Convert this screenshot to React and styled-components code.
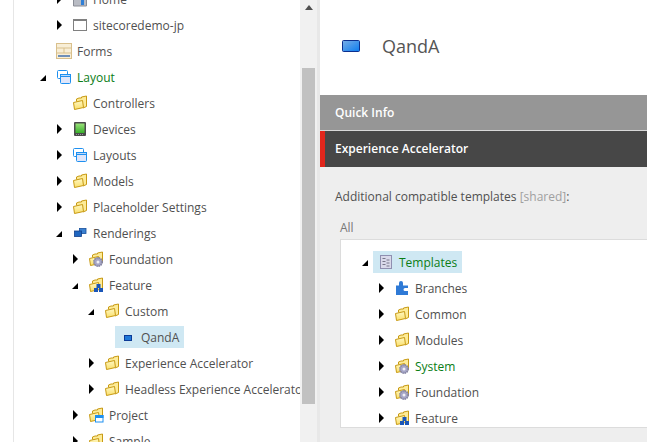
import React from 'react';
import styled, { createGlobalStyle } from 'styled-components';

const GlobalStyle = createGlobalStyle`
  html, body {
    margin: 0;
    padding: 0;
    background: #fff;
    font-family: "Open Sans", "Liberation Sans", sans-serif;
    font-size: 12px;
    color: #505050;
  }
`;

const Page = styled.div`
  display: grid;
  grid-template-columns: 320px 1fr;
  width: 647px;
  height: 442px;
  overflow: hidden;
`;

const Sidebar = styled.aside`
  display: flex;
  height: 442px;
  padding-left: 13px;
  box-sizing: border-box;
  background: #fff;
`;

const TreeViewport = styled.div`
  flex: 1;
  min-width: 0;
  border-left: 1px solid #e6e6e6;
  overflow: hidden;
`;

const SidebarTree = styled.div`
  margin-top: -14px;
  margin-left: -14px;
`;

const Scrollbar = styled.div`
  display: flex;
  flex-direction: column;
  align-items: center;
  width: 17px;
  background: #f1f1f1;
`;

const ScrollUp = styled.div`
  margin: 5px 0 0;
  width: 0;
  height: 0;
  border-left: 4px solid transparent;
  border-right: 4px solid transparent;
  border-bottom: 5px solid #505050;
`;

const ScrollThumb = styled.div`
  margin-top: 58px;
  width: 13px;
  height: 336px;
  background: #c1c1c1;
`;

const Splitter = styled.div`
  width: 3px;
  background: #e8e8e8;
`;

const Main = styled.main`
  display: flex;
  flex-direction: column;
  min-width: 0;
  height: 442px;
  background: #eee;
`;

const Header = styled.header`
  display: flex;
  align-items: center;
  gap: 22px;
  height: 95px;
  padding: 0 0 3px 22px;
  box-sizing: border-box;
  background: #fff;
`;

const Title = styled.h1`
  margin: 0;
  font-size: 18px;
  font-weight: 400;
  line-height: 24px;
  color: #555;
`;

const Section = styled.div`
  height: ${(p) => (p.$active ? 36 : 35)}px;
  line-height: 35px;
  margin-bottom: ${(p) => (p.$active ? 0 : 1)}px;
  padding-left: ${(p) => (p.$active ? 10 : 15)}px;
  background: ${(p) => (p.$active ? '#474747' : '#969696')};
  border-left: ${(p) => (p.$active ? '5px solid #e1261c' : '0')};
  color: #fff;
  font-weight: 600;
`;

const Divider = styled.div`
  height: 1px;
  margin-top: -1px;
  background: #d8d8d8;
`;

const SectionBody = styled.div`
  flex: 1;
  min-height: 0;
  padding: 21px 0 0 15px;
`;

const FieldLabel = styled.div`
  line-height: 18px;
  color: #505050;
`;

const Shared = styled.span`
  color: #a0a0a0;
`;

const ListLabel = styled.div`
  margin: 13px 0 0 5px;
  line-height: 18px;
  color: #777;
`;

const TreeBox = styled.div`
  height: 189px;
  margin: 2px 0 0 5px;
  padding-top: 9px;
  box-sizing: border-box;
  background: #fff;
  border: 1px solid #dcdcdc;
  border-right: 0;
  overflow: hidden;
`;

const Row = styled.div`
  display: flex;
  align-items: center;
  height: 26px;
  padding-left: ${(p) => p.$indent}px;
  white-space: nowrap;
`;

const Toggle = styled.span`
  display: flex;
  align-items: center;
  flex: none;
  width: 16px;
  height: 16px;
`;

const Closed = styled.i`
  width: 0;
  height: 0;
  margin-left: 1px;
  border-top: 5px solid transparent;
  border-bottom: 5px solid transparent;
  border-left: 5px solid #000;
`;

const Open = styled.i`
  width: 0;
  height: 0;
  margin-top: 1px;
  border-left: 6px solid transparent;
  border-bottom: 6px solid #000;
`;

const Item = styled.span`
  display: flex;
  align-items: center;
  gap: 5px;
  height: 22px;
  margin-left: -5px;
  padding: 0 5px;
  background: ${(p) => (p.$selected ? '#cfe8f3' : 'transparent')};
  color: ${(p) => (p.$green ? '#0b7d16' : '#505050')};
`;

const Glyph = styled.svg`
  flex: none;
  display: block;
  width: 16px;
  height: 16px;
`;

const Overlay = ({ type }) => {
  if (type === 'gear') {
    return (
      <g>
        <circle cx="10" cy="11" r="4.200" fill="#a5a5c6" stroke="#80809f" strokeWidth="1.500" strokeDasharray="1.500 0.700" />
        <circle cx="10" cy="11" r="1.500" fill="#eeeef5" />
      </g>
    );
  }
  if (type === 'blocks') {
    return (
      <g fill="#1a56b8">
        <rect x="8.500" y="7" width="4" height="4" />
        <rect x="6" y="11" width="4" height="4" />
        <rect x="11" y="11" width="4" height="4" />
      </g>
    );
  }
  if (type === 'window') {
    return (
      <g>
        <rect x="7.500" y="8.500" width="7.500" height="6.500" fill="#fff" stroke="#1e90f0" />
        <rect x="7.500" y="8.500" width="7.500" height="2" fill="#1e90f0" stroke="#1e90f0" />
      </g>
    );
  }
  return null;
};

const Folder = ({ overlay }) => (
  <Glyph viewBox="0 0 16 16">
    <path d="M4.500 6.500V4L7 3H9.500V2L14.500 1V11.500L11 13" fill="#fdeb97" stroke="#c89a14" />
    <path d="M1.500 7.500L10.500 5.500L11.500 12.500L2.500 14.500Z" fill="url(#folderFront)" stroke="#c89a14" />
    <Overlay type={overlay} />
  </Glyph>
);

const icons = {
  folder: () => <Folder />,
  folderGear: () => <Folder overlay="gear" />,
  folderBlocks: () => <Folder overlay="blocks" />,
  folderWindow: () => <Folder overlay="window" />,
  home: () => (
    <Glyph viewBox="0 0 16 16">
      <path d="M1.500 9L8 3l6.500 6v6h-13z" fill="#b9bcc4" stroke="#8a8d96" />
      <rect x="9" y="9" width="3" height="5" fill="#2f7fd6" />
    </Glyph>
  ),
  site: () => (
    <Glyph viewBox="0 0 16 16">
      <rect x="1.500" y="2.500" width="13" height="11" fill="#fff" stroke="#808080" />
      <rect x="1" y="2" width="14" height="2" fill="#808080" />
    </Glyph>
  ),
  forms: () => (
    <Glyph viewBox="0 0 16 16">
      <rect x="0.500" y="0.500" width="15" height="15" fill="#f8eed6" stroke="#d9c08c" />
      <path d="M1 5h14M1 10h14M8 5v5" stroke="#d9c08c" fill="none" />
      <rect x="2" y="12" width="12" height="2" fill="#6f8fb8" />
    </Glyph>
  ),
  layout: () => (
    <Glyph viewBox="0 0 16 16">
      <rect x="1.500" y="1.500" width="10" height="8" rx="1" fill="#fff" stroke="#1e90f0" />
      <rect x="4.500" y="5.500" width="10" height="9" rx="1" fill="#dfe6fa" stroke="#1e90f0" />
      <rect x="4.500" y="5.500" width="10" height="2" fill="#bcd9fb" stroke="#1e90f0" />
    </Glyph>
  ),
  device: () => (
    <Glyph viewBox="0 0 16 16">
      <rect x="2" y="1" width="12" height="14" rx="1" fill="#4a4a4a" />
      <rect x="3.500" y="2.500" width="9" height="9.500" fill="url(#deviceScreen)" />
      <path d="M4 13.500h8" stroke="#999" strokeDasharray="1 1" />
    </Glyph>
  ),
  renderings: () => (
    <Glyph viewBox="0 0 16 16">
      <rect x="7.500" y="3.500" width="6.500" height="5" fill="#3a80d0" stroke="#174f9c" strokeWidth="0.800" />
      <rect x="2.500" y="6" width="7" height="5.500" fill="#1f66c0" stroke="#123f8a" strokeWidth="0.800" />
    </Glyph>
  ),
  rendering: () => (
    <Glyph viewBox="0 0 16 16">
      <rect x="4.500" y="6.500" width="7" height="5" fill="#1e78d8" stroke="#0c3a96" />
    </Glyph>
  ),
  templates: () => (
    <Glyph viewBox="0 0 16 16">
      <rect x="2.500" y="1.500" width="11" height="13" fill="#d9d9ea" stroke="#8f8fb0" />
      <path d="M4.500 4.500h3M4.500 7.500h3M4.500 10.500h3M8.500 6h3M8.500 9h3M8.500 12h3" stroke="#77778a" />
    </Glyph>
  ),
  branches: () => (
    <Glyph viewBox="0 0 16 16">
      <path d="M2 5.500h3V3a2 2 0 0 1 4 0v2.500h5V8h-3a1.500 1.500 0 0 0 0 3h3v4H2z" fill="#2f7ad6" />
    </Glyph>
  ),
};

const HeaderIcon = styled.svg`
  display: block;
  flex: none;
  width: 18px;
  height: 12px;
`;

const SharedDefs = styled.svg`
  position: absolute;
  width: 0;
  height: 0;
`;

const sidebarItems = [
  { level: 2, label: 'Home', icon: 'home', state: 'closed' },
  { level: 2, label: 'sitecoredemo-jp', icon: 'site', state: 'closed' },
  { level: 1, label: 'Forms', icon: 'forms' },
  { level: 1, label: 'Layout', icon: 'layout', state: 'open', green: true },
  { level: 2, label: 'Controllers', icon: 'folder' },
  { level: 2, label: 'Devices', icon: 'device', state: 'closed' },
  { level: 2, label: 'Layouts', icon: 'layout', state: 'closed' },
  { level: 2, label: 'Models', icon: 'folder', state: 'closed' },
  { level: 2, label: 'Placeholder Settings', icon: 'folder', state: 'closed' },
  { level: 2, label: 'Renderings', icon: 'renderings', state: 'open' },
  { level: 3, label: 'Foundation', icon: 'folderGear', state: 'closed' },
  { level: 3, label: 'Feature', icon: 'folderBlocks', state: 'open' },
  { level: 4, label: 'Custom', icon: 'folder', state: 'open' },
  { level: 5, label: 'QandA', icon: 'rendering', selected: true },
  { level: 4, label: 'Experience Accelerator', icon: 'folder', state: 'closed' },
  { level: 4, label: 'Headless Experience Accelerator', icon: 'folder', state: 'closed' },
  { level: 3, label: 'Project', icon: 'folderWindow', state: 'closed' },
  { level: 3, label: 'Sample', icon: 'folder', state: 'closed' },
];

const templateItems = [
  { level: 1, label: 'Templates', icon: 'templates', state: 'open', green: true, selected: true },
  { level: 2, label: 'Branches', icon: 'branches', state: 'closed' },
  { level: 2, label: 'Common', icon: 'folder', state: 'closed' },
  { level: 2, label: 'Modules', icon: 'folder', state: 'closed' },
  { level: 2, label: 'System', icon: 'folderGear', state: 'closed', green: true },
  { level: 2, label: 'Foundation', icon: 'folderGear', state: 'closed' },
  { level: 2, label: 'Feature', icon: 'folderBlocks', state: 'closed' },
];

const TreeRow = ({ item, origin }) => {
  const Icon = icons[item.icon];
  return (
    <Row $indent={origin + (item.level - 1) * 16}>
      <Toggle>
        {item.state === 'closed' && <Closed />}
        {item.state === 'open' && <Open />}
      </Toggle>
      <Item $selected={item.selected} $green={item.green}>
        <Icon />
        {item.label}
      </Item>
    </Row>
  );
};

export default function App() {
  return (
    <>
      <GlobalStyle />
      <SharedDefs aria-hidden="true">
        <defs>
          <linearGradient id="folderFront" x1="0" y1="0" x2="0" y2="1">
            <stop offset="0" stopColor="#fff8c4" />
            <stop offset="1" stopColor="#fadf6a" />
          </linearGradient>
          <linearGradient id="deviceScreen" x1="0" y1="0" x2="0" y2="1">
            <stop offset="0" stopColor="#9be27a" />
            <stop offset="1" stopColor="#38b02a" />
          </linearGradient>
          <linearGradient id="qanda" x1="0" y1="0" x2="1" y2="1">
            <stop offset="0" stopColor="#7aaee6" />
            <stop offset="1" stopColor="#0a7cf0" />
          </linearGradient>
        </defs>
      </SharedDefs>
      <Page>
        <Sidebar>
          <TreeViewport>
            <SidebarTree>
              {sidebarItems.map((item) => (
                <TreeRow key={item.label} item={item} origin={40} />
              ))}
            </SidebarTree>
          </TreeViewport>
          <Scrollbar>
            <ScrollUp />
            <ScrollThumb />
          </Scrollbar>
          <Splitter />
        </Sidebar>
        <Main>
          <Header>
            <HeaderIcon viewBox="0 0 18 12">
              <rect x="0.500" y="0.500" width="17" height="11" rx="1" fill="url(#qanda)" stroke="#0c2f8e" />
            </HeaderIcon>
            <Title>QandA</Title>
          </Header>
          <Section>Quick Info</Section>
          <Divider />
          <Section $active>Experience Accelerator</Section>
          <SectionBody>
            <FieldLabel>
              Additional compatible templates <Shared>[shared]</Shared>:
            </FieldLabel>
            <ListLabel>All</ListLabel>
            <TreeBox>
              {templateItems.map((item) => (
                <TreeRow key={item.label} item={item} origin={21} />
              ))}
            </TreeBox>
          </SectionBody>
        </Main>
      </Page>
    </>
  );
}
